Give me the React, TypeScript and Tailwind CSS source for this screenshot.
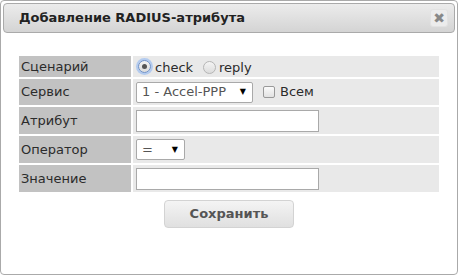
const font = "font-['DejaVu_Sans',Verdana,sans-serif]";

function Radio({ checked, className = "" }: { checked?: boolean; className?: string }) {
  return (
    <span
      className={`flex items-center justify-center shrink-0 w-[13px] h-[13px] rounded-full border ${
        checked ? "border-[#6b8fc9] shadow-[0_0_0_2px_#b3cbef]" : "border-[#b5b5b5]"
      } bg-gradient-to-b from-[#f4f4f4] to-[#dcdcdc] ${className}`}
    >
      {checked && <span className="w-[5px] h-[5px] rounded-full bg-[#555]" />}
    </span>
  );
}

function Select({ value, width }: { value: string; width: string }) {
  return (
    <div
      className={`${width} h-[21px] bg-white border border-[#a9a9a9] rounded-[2px] flex items-center justify-between pl-[5px] pr-[6px]`}
    >
      <span className="text-[#555] text-[13px]">{value}</span>
      <span className="text-[8px] text-black leading-none">▼</span>
    </div>
  );
}

function Row({ label, h, children }: { label: string; h: string; children: React.ReactNode }) {
  return (
    <>
      <div className={`${h} bg-[#c2c2c2] flex items-center pl-[2px] text-[13px] text-[#2b2b2b]`}>{label}</div>
      <div className={`${h} bg-[#e9e9e9] flex items-center pl-[3px] text-[13px] text-[#2b2b2b]`}>{children}</div>
    </>
  );
}

export default function App() {
  return (
    <div className={`w-[458px] h-[275px] bg-white border border-[#aaa] rounded-[4px] p-[2px] ${font}`}>
      {/* TITLE BAR */}
      <div className="h-[30px] border border-[#aaa] rounded-[4px] bg-gradient-to-b from-[#ececec] to-[#d4d4d4] flex items-center justify-between pl-[15px] pr-[6px]">
        <span className="font-bold text-[13px] text-[#222]">Добавление RADIUS-атрибута</span>
        <span className="w-[18px] h-[18px] rounded-[3px] bg-[#ececec] border border-[#e2e2e2] flex items-center justify-center text-[#888] text-[14px] font-bold leading-none">
          ✖
        </span>
      </div>

      {/* FORM */}
      <div className="px-[16px] pt-[23px]">
        <div className="grid grid-cols-[112px_1fr] gap-x-[2px] gap-y-[2px]">
          <Row label="Сценарий" h="h-[21px]">
            <div className="flex items-center">
              <Radio checked className="ml-[2px]" />
              <span className="ml-[4px] mt-[2px]">check</span>
              <Radio className="ml-[10px] mt-[1px]" />
              <span className="ml-[3px] mt-[2px]">reply</span>
            </div>
          </Row>
          <Row label="Сервис" h="h-[26px]">
            <Select value="1 - Accel-PPP" width="w-[117px]" />
            <span className="ml-[10px] w-[12px] h-[12px] border border-[#999] rounded-[2px] bg-gradient-to-b from-[#fafafa] to-[#e2e2e2]" />
            <span className="ml-[5px]">Всем</span>
          </Row>
          <Row label="Атрибут" h="h-[27px]">
            <div className="w-[183px] h-[22px] bg-white border border-[#a9a9a9]" />
          </Row>
          <Row label="Оператор" h="h-[27px]">
            <Select value="=" width="w-[49px]" />
          </Row>
          <Row label="Значение" h="h-[27px]">
            <div className="w-[183px] h-[22px] bg-white border border-[#a9a9a9]" />
          </Row>
        </div>

        <div className="flex justify-center mt-[8px]">
          <button className="w-[130px] h-[28px] rounded-[4px] border border-[#d3d3d3] bg-gradient-to-b from-[#f4f4f4] to-[#e0e0e0] text-[#555] font-bold text-[13px]">
            Сохранить
          </button>
        </div>
      </div>
    </div>
  );
}
